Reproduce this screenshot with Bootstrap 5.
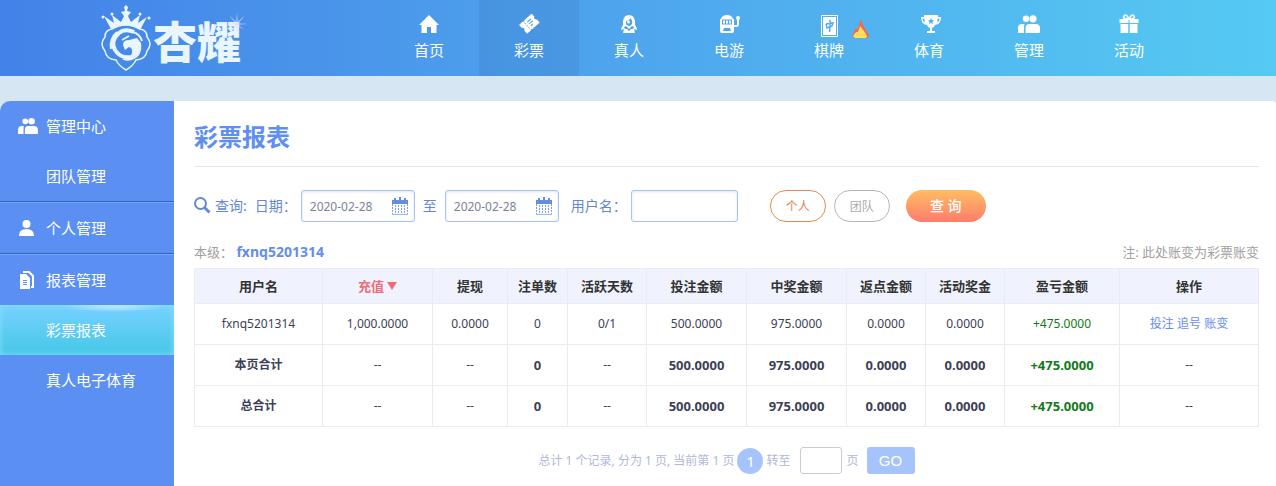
<!DOCTYPE html>
<html lang="zh-CN">
<head>
<meta charset="utf-8">
<meta name="viewport" content="width=device-width, initial-scale=1">
<title>彩票报表</title>
<link href="https://cdn.jsdelivr.net/npm/bootstrap@5.3.0/dist/css/bootstrap.min.css" rel="stylesheet">
<style>
  body { font-family: "Noto Sans", "Noto Sans CJK SC", sans-serif; font-size: 12px; line-height: 20px; color: #333; background: #d6e6f2; }
  a { text-decoration: none; }
  .site-header { background: linear-gradient(90deg, #4382e8, #4d9fec 40%, #55caf2); }
  .header-inner { max-width: 1082px; }
  .brand { color: #e9f6ff; font: 900 44px/60px "Noto Sans CJK SC", sans-serif; }
  .brand svg { width: 56px; height: 72px; }
  .brand-name { position: relative; padding-top: 4px; }
  .brand-name svg { position: absolute; width: 24px; height: 24px; right: -8px; top: 6px; }
  .main-link { width: 100px; height: 76px; padding-top: 14px; color: #fff; font-size: 15px; position: relative; }
  .main-link.active { background: rgba(60, 120, 190, .25); }
  .main-link svg { width: 22px; height: 20px; fill: #fff; }
  .main-link span { margin-top: 5px; line-height: 22px; }
  .main-link .hot { position: absolute; width: 18px; height: 20px; left: 73px; top: 19px; }
  .page-body { margin-top: 25px; min-height: calc(100vh - 101px); border-radius: 10px 4px 0 0; background: #fff; overflow: hidden; }
  .side { flex: 0 0 174px; background: #5b8ff2; }
  .side a { height: 50px; padding-left: 18px; color: #fff; font-size: 15px; }
  .side svg { width: 20px; height: 18px; margin-right: 8px; fill: #fff; }
  .side .sub-link { padding-left: 46px; }
  .side hr { height: 2px; margin: 0; border: 0; border-top: 1px solid #2b66cd; background: #79a5f6; opacity: 1; }
  .side .active { background: radial-gradient(ellipse 54px 7px at 114px 0, #e0f4ff, rgba(224, 244, 255, 0)), linear-gradient(#78d1ff, #44c7e8); box-shadow: inset 0 0 6px #86e0fa; }
  .content-pane { padding: 20px 17px 0 20px; }
  h1 { font-size: 24px; line-height: 32px; font-weight: 700; color: #5f8ff0; padding-bottom: 13px; border-bottom: 1px solid #e4e4ee; margin-bottom: 22px; }
  .colon { font-family: "Noto Sans CJK TC", sans-serif; }
  .query { color: #6488cf; font-size: 14px; line-height: 32px; }
  .query .form-control { height: 32px; padding: 0 8px; border: 1px solid #a6c3f5; border-radius: 3px; font-size: 12px; color: #7d839a; box-shadow: inset 0 1px 3px #e2e4fa; }
  .date-field { position: relative; width: 114px; }
  .date-field svg { position: absolute; right: 7px; top: 7px; width: 16px; height: 18px; pointer-events: none; }
  .date-field .form-control { padding-top: 1px; }
  .user-field { width: 107px; }
  .pill { width: 56px; height: 32px; border: 1px solid #b5b5b5; border-radius: 16px; background: #fff; color: #aaa; font-size: 12px; padding: 0; }
  .pill.on { margin-left: 32px; border-color: #e58a54; color: #e0804f; }
  .go-query { width: 80px; height: 32px; border: 0; border-radius: 16px; background: linear-gradient(#ffbd62, #fd7d6d); color: #fff; font-size: 14px; font-weight: 500; padding: 0; }
  .level { margin-top: 20px; font-size: 13px; color: #a0a0a0; }
  .level a { font-size: 14px; font-weight: 700; color: #648ee8; }
  .report { table-layout: fixed; margin: 6px 0 0; color: #3c3f55; border-color: #e9ebf3; text-align: center; }
  .report th, .report td { padding: 0; height: 41px; border: 1px solid #e9ebf3; vertical-align: middle; }
  .report thead th { height: 35px; background: #f0f3fd; color: #333; font-size: 13px; font-weight: 700; border-color: #e9ecf8; }
  .report thead .sorted { color: #f26b77; }
  .report .sorted svg { width: 10px; height: 8px; fill: #f26b77; margin-left: 3px; vertical-align: 1px; }
  .report .total { font-weight: 700; font-size: 12px; }
  .report .total .num { font-size: 13px; }
  .report .gain { color: #117a18; }
  .report a { color: #678df0; }
  .c-user { width: 128px; } .c-in { width: 110px; } .c-out { width: 75px; } .c-bets { width: 60px; }
  .c-days { width: 79px; } .c-sum { width: 100px; } .c-gain { width: 115px; } .c-act { width: 139px; }
  .pager { margin-top: 20px; color: #b0b8d5; }
  .pager .current { width: 26px; height: 26px; border-radius: 50%; background: #a6c4fb; color: #fff; font-size: 15px; margin: 0 3px; }
  .pager .form-control { width: 42px; height: 27px; margin: 0 5px 0 9px; padding: 0 4px; border: 1px solid #ccc; border-radius: 3px; font-size: 12px; }
  .pager .go { width: 48px; height: 27px; margin-left: 8px; padding: 0; border: 0; border-radius: 3px; background: #a6c4fb; color: #fff; font: 15px "Liberation Sans", sans-serif; }
</style>
</head>
<body>
<svg class="d-none" xmlns="http://www.w3.org/2000/svg">
  <symbol id="people" viewBox="0 0 22 20"><circle cx="8" cy="4.800" r="3.200"/><circle cx="15" cy="4.800" r="3.600"/><path d="M0 19v-5q0-4 4-4h2.500q-.5 1-.5 4v5zM7.500 19v-5q0-4 4-4h6q4.500 0 4.500 4v4q0 1-1 1z"/></symbol>
  <symbol id="calendar" viewBox="0 0 16 18"><path fill="#648ce0" d="M0 3h2V1h2v2h3V0h2v3h3V1h2v2h2v4H0z"/><path fill="none" stroke="#7b9de4" stroke-dasharray="2 1" d="M.5 7v10.500M3.500 8v9M6.500 8v9M9.500 8v9M12.500 8v9M15.500 7v10.500"/><path fill="none" stroke="#9db5e9" d="M0 17.500h16"/></symbol>
</svg>

<header class="site-header">
  <div class="header-inner d-flex mx-auto">
    <a class="brand d-flex align-items-center" href="#">
      <svg viewBox="0 0 56 72" fill="none" stroke="#e9f6ff" aria-hidden="true">
        <path fill="#e9f6ff" stroke="none" d="M14 27 7 14l10 7-2-8 9 7 3-6-3-4 4-1-1-4 2-2 2 2-1 4 4 1-3 4 3 6 9-7-2 8 9-6-7 13Q29 19 14 27z"/>
        <g fill="#e9f6ff" stroke="none"><circle cx="6" cy="15" r="1.500"/><circle cx="15" cy="12" r="1.500"/><circle cx="43" cy="12" r="1.500"/><circle cx="52" cy="16" r="1.500"/></g>
        <path stroke-width="1.500" d="M15 27q-7 1-7 8-6 7 0 14 1 8 11 9 3 6 10 10 7-4 10-10 10-1 11-9 6-7 0-14 0-7-7-8-14-8-28 0z"/>
        <path stroke-width="4" d="M37 30q-9-4-15 1-9 8-4 17 6 9 16 7"/>
        <path stroke-width="2" d="M14 47q-2-10 6-17"/>
        <path fill="#e9f6ff" stroke="none" d="M26 43q0-5 6-5l8-2 4 5q2 13-9 17-7 2-10-1 8 0 10-6 1-5-3-6l-4 3z"/>
        <path stroke-width="2" d="M36 30q7 2 9 9M25 38l7-4"/>
      </svg>
      <span class="brand-name">杏耀<svg viewBox="0 0 28 28" aria-hidden="true"><path fill="#d5dcff" opacity=".6" d="m14 0 1 11 8-7-7 9 12 1-12 1 7 7-8-6-1 12-1-12-8 6 7-7-12-1 12-1-7-9 8 7z"/></svg></span>
    </a>
    <nav class="d-flex ms-auto" aria-label="主导航">
      <a class="main-link d-flex flex-column align-items-center" href="#"><svg viewBox="0 0 22 20"><path d="M11 1 1 11h2.500v8H9v-6h4v6h5.500v-8H21z"/></svg><span>首页</span></a>
      <a class="main-link active d-flex flex-column align-items-center" href="#"><svg viewBox="0 0 22 20"><g transform="rotate(-42 11 10)"><path d="M3 4h5q1 2 2 0h10v4q-3 2 0 4v4H10q-1-2-2 0H3v-4q3-2 0-4z"/><path stroke="#8fc2ee" stroke-dasharray="2 1" d="M8.500 6v8"/><path stroke="#4a97de" d="M11 7.500h5M11 10h5M11 12.500h3"/></g></svg><span>彩票</span></a>
      <a class="main-link d-flex flex-column align-items-center" href="#"><svg viewBox="0 0 22 20"><path d="M5 11V7q1-6 6-6t6 6v4q2 2 2 5l-3-1 1 4H5l1-4-3 1q0-3 2-5z"/><path fill="#4ea4eb" d="M8 7q4 0 4-3 3 2 2 6-3 4-6 0zM6 13l2-1 3 3 3-3 2 1-1 2-2 0-2 2-2-2-2 0z"/><circle cx="10.500" cy="8" r="1.500"/></svg><span>真人</span></a>
      <a class="main-link d-flex flex-column align-items-center" href="#"><svg viewBox="0 0 22 20"><path d="M3 5q1-4 6-4t6 4h1v12q0 2-2 2H4q-2 0-2-2V5z"/><path fill="#4fa8ed" d="M4 5.500h10v5H4zM6 14h6l1 3H5z"/><path d="M5 6.500h2v3H5zM8 6.500h2v3H8zM11 6.500h2v3h-2z"/><path fill="none" stroke="#fff" stroke-width="2" d="M16 12h3q1 0 1-2V5"/><circle cx="20" cy="4" r="2"/></svg><span>电游</span></a>
      <a class="main-link d-flex flex-column align-items-center" href="#"><svg viewBox="0 0 22 20" overflow="visible"><path fill="none" stroke="#fff" d="M3.500 1.500h16v21h-16z"/><path d="M5 3h13v18H5z"/><path fill="none" stroke="#50adee" stroke-width="1.500" d="m8 10 1 4 5-2 1-3-7 1M11.500 6l1 2-1 10"/></svg><span>棋牌</span><svg class="hot" viewBox="0 0 18 20"><path fill="#ed6b55" d="M8 0q2 3 3 6l6 10-1 3H2l-2-3q2-2 3-6l2 0q3-4 3-10z"/><path fill="#ffdf59" d="m8 7 4 5 3 5-1 2H3l-2-2 3-4 2 0z"/></svg></a>
      <a class="main-link d-flex flex-column align-items-center" href="#"><svg viewBox="0 0 22 20" overflow="visible"><path d="M6 1h14v2h3q0 7-6 8-1 3-3 3v3h3v2H9v-2h3v-3q-2 0-3-3-6-1-6-8h3z"/><path fill="#52b6ee" d="M4.500 4.500h2v4q-2-1-2-4zm15 0h2q0 3-2 4zM13 4l1 2 2 .4-1.500 1.600.5 2-2-1-2 1 .5-2L10 6.400 12 6z"/></svg><span>体育</span></a>
      <a class="main-link d-flex flex-column align-items-center" href="#"><svg><use href="#people"/></svg><span>管理</span></a>
      <a class="main-link d-flex flex-column align-items-center" href="#"><svg viewBox="0 0 22 20"><path d="M1.500 5h19v4h-19zM2.500 10h8v9h-8zM11.500 10h8v9h-8z"/><path fill="none" stroke="#fff" stroke-width="1.500" d="M11 5Q4 5 6 2t5 3q3-6 5-3t-5 3"/><path stroke="#54c0ef" d="M11 6v13"/></svg><span>活动</span></a>
    </nav>
  </div>
</header>

<div class="page-body d-flex">
  <nav class="side" aria-label="管理菜单">
    <a class="d-flex align-items-center" href="#"><svg><use href="#people"/></svg>管理中心</a>
    <a class="sub-link d-flex align-items-center" href="#">团队管理</a>
    <hr>
    <a class="d-flex align-items-center" href="#"><svg viewBox="0 0 20 18"><circle cx="8.500" cy="5" r="4"/><path d="M1 17q0-7 7.500-7t7.500 7z"/></svg>个人管理</a>
    <hr>
    <a class="d-flex align-items-center" href="#"><svg viewBox="0 0 20 18"><path d="M2 3h6l4 4v11H2z"/><path fill="none" stroke="#fff" stroke-width="2" d="M5 1h6l4 4v11h-2"/><path stroke="#5b8ff2" d="M5 9.500h4M5 11.500h4M5 13.500h4"/></svg>报表管理</a>
    <a class="sub-link active d-flex align-items-center" href="#">彩票报表</a>
    <a class="sub-link d-flex align-items-center" href="#">真人电子体育</a>
  </nav>

  <main class="content-pane flex-grow-1">
    <h1>彩票报表</h1>
    <form class="query d-flex align-items-center">
      <svg width="17" height="17" viewBox="0 0 17 17" fill="none" stroke="#648ad6" stroke-width="2" aria-hidden="true"><circle cx="6.500" cy="6.500" r="5.500"/><path stroke-width="3" d="m10.500 10.500 5 5"/></svg>
      <span class="ms-1 me-2">查询:</span>
      <label for="from" class="me-1">日期<span class="colon">：</span></label>
      <div class="date-field"><input id="from" class="form-control" type="text" value="2020-02-28"><svg><use href="#calendar"/></svg></div>
      <label for="to" class="mx-2">至</label>
      <div class="date-field"><input id="to" class="form-control" type="text" value="2020-02-28"><svg><use href="#calendar"/></svg></div>
      <label for="user" class="ms-2 ps-1 me-1">用户名<span class="colon">：</span></label>
      <input id="user" class="form-control user-field" type="text">
      <button type="button" class="pill on">个人</button>
      <button type="button" class="pill ms-2">团队</button>
      <button type="button" class="go-query ms-3">查 询</button>
    </form>
    <div class="level d-flex justify-content-between">
      <div>本级<span class="colon">：</span> <a href="#">fxnq5201314</a></div>
      <div>注: 此处账变为彩票账变</div>
    </div>
    <table class="report table">
      <colgroup><col class="c-user"><col class="c-in"><col class="c-out"><col class="c-bets"><col class="c-days"><col class="c-sum"><col class="c-sum"><col class="c-days"><col class="c-days"><col class="c-gain"><col class="c-act"></colgroup>
      <thead>
        <tr><th>用户名</th><th class="sorted">充值<svg viewBox="0 0 10 8"><path d="M0 0h10L5 8z"/></svg></th><th>提现</th><th>注单数</th><th>活跃天数</th><th>投注金额</th><th>中奖金额</th><th>返点金额</th><th>活动奖金</th><th>盈亏金额</th><th>操作</th></tr>
      </thead>
      <tbody>
        <tr><td>fxnq5201314</td><td>1,000.0000</td><td>0.0000</td><td>0</td><td>0/1</td><td>500.0000</td><td>975.0000</td><td>0.0000</td><td>0.0000</td><td class="gain">+475.0000</td><td><a href="#">投注</a> <a href="#">追号</a> <a href="#">账变</a></td></tr>
        <tr class="total"><td>本页合计</td><td class="fw-normal">--</td><td class="fw-normal">--</td><td class="num">0</td><td class="fw-normal">--</td><td class="num">500.0000</td><td class="num">975.0000</td><td class="num">0.0000</td><td class="num">0.0000</td><td class="num gain">+475.0000</td><td class="fw-normal">--</td></tr>
        <tr class="total"><td>总合计</td><td class="fw-normal">--</td><td class="fw-normal">--</td><td class="num">0</td><td class="fw-normal">--</td><td class="num">500.0000</td><td class="num">975.0000</td><td class="num">0.0000</td><td class="num">0.0000</td><td class="num gain">+475.0000</td><td class="fw-normal">--</td></tr>
      </tbody>
    </table>
    <form class="pager d-flex justify-content-center align-items-center">
      <span>总计 1 个记录, 分为 1 页, 当前第 1 页</span>
      <a href="#" class="current d-flex align-items-center justify-content-center">1</a>
      <label for="jump">转至</label>
      <input id="jump" class="form-control" type="text">
      <span>页</span>
      <button type="button" class="go">GO</button>
    </form>
  </main>
</div>
<script src="https://cdn.jsdelivr.net/npm/bootstrap@5.3.0/dist/js/bootstrap.bundle.min.js"></script>
</body>
</html>
